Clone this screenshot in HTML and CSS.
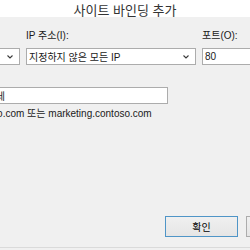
FILE: index.html
```html
<!doctype html>
<html lang="ko">
<head>
<meta charset="UTF-8">
<title>사이트 바인딩 추가</title>
<link rel="stylesheet" href="styles.css">
</head>
<body>
<div class="dialog">
	<div class="titlebar">사이트 바인딩 추가</div>
	<div class="content">
		<div class="fields">
			<div class="field">
				<label>종류(T):</label>
				<div class="combo"><span class="value">http</span><svg class="chev" width="6" height="4" viewBox="0 0 6 4"><polyline points="0.5,0.5 3,3 5.5,0.5" fill="none" stroke="#3a3a3a" stroke-width="1.1"/></svg></div>
			</div>
			<div class="field">
				<label>IP 주소(I):</label>
				<div class="combo"><span class="value">지정하지 않은 모든 IP</span><svg class="chev" width="6" height="4" viewBox="0 0 6 4"><polyline points="0.5,0.5 3,3 5.5,0.5" fill="none" stroke="#3a3a3a" stroke-width="1.1"/></svg></div>
			</div>
			<div class="field">
				<label>포트(O):</label>
				<div class="textbox"><span class="value">80</span></div>
			</div>
		</div>
		<div class="textbox host"><span class="value">사이트 호스트 세</span></div>
		<p class="hint">예: www.contoso.com 또는 marketing.contoso.com</p>
		<div class="actions">
			<button class="btn default">확인</button>
			<button class="btn">취소</button>
		</div>
	</div>
	<div class="foot"></div>
</div>
</body>
</html>
```
FILE: styles.css
```css
html,body {margin: 0;padding: 0;}
body {width: 250px;height: 250px;overflow: hidden;background-color: #f0f0f0;font-family: "Liberation Sans", "Noto Sans CJK KR", sans-serif;font-size: 10px;color: #1a1a1a;}

/* 창 전체 */
.dialog {display: flex;flex-direction: column;height: 250px;}
.titlebar {height: 17px;line-height: 19px;background-color: #fff;text-align: center;font-family: "Noto Sans CJK KR", sans-serif;font-size: 13px;color: #333;}

/* 왼쪽이 잘린 본문 영역 */
.content {flex: 1;display: flex;flex-direction: column;width: 403px;margin-left: -73px;padding: 12px 11px 0 0;box-sizing: border-box;}

.fields {display: grid;grid-template-columns: 93px 170px 60px;column-gap: 6px;}
.field {display: flex;flex-direction: column;}
.field label {height: 14px;line-height: 14px;margin-bottom: 5px;white-space: nowrap;}

.combo,.textbox {display: flex;align-items: center;height: 17px;box-sizing: border-box;border: 1px solid #acacac;background-color: #fff;padding: 0 2px;white-space: nowrap;overflow: hidden;}
.combo .value {flex: 1;overflow: hidden;}
.combo .chev {flex: none;margin-right: 4px;}

.host {width: 241px;margin-top: 22px;padding-left: 7px;}
.hint {margin: 3px 0 0;padding-left: 2px;line-height: 14px;white-space: nowrap;}

/* 아래쪽 버튼 */
.actions {display: flex;justify-content: flex-end;gap: 8px;margin-top: auto;margin-bottom: 10px;}
.btn {width: 73px;height: 21px;padding: 0;border: 1px solid #acacac;background: linear-gradient(#f0f0f0, #e5e5e5);font: inherit;color: #000;}
.btn.default {border-color: #4f95c7;}

.foot {height: 2px;border-top: 1px solid #dadada;}
```
